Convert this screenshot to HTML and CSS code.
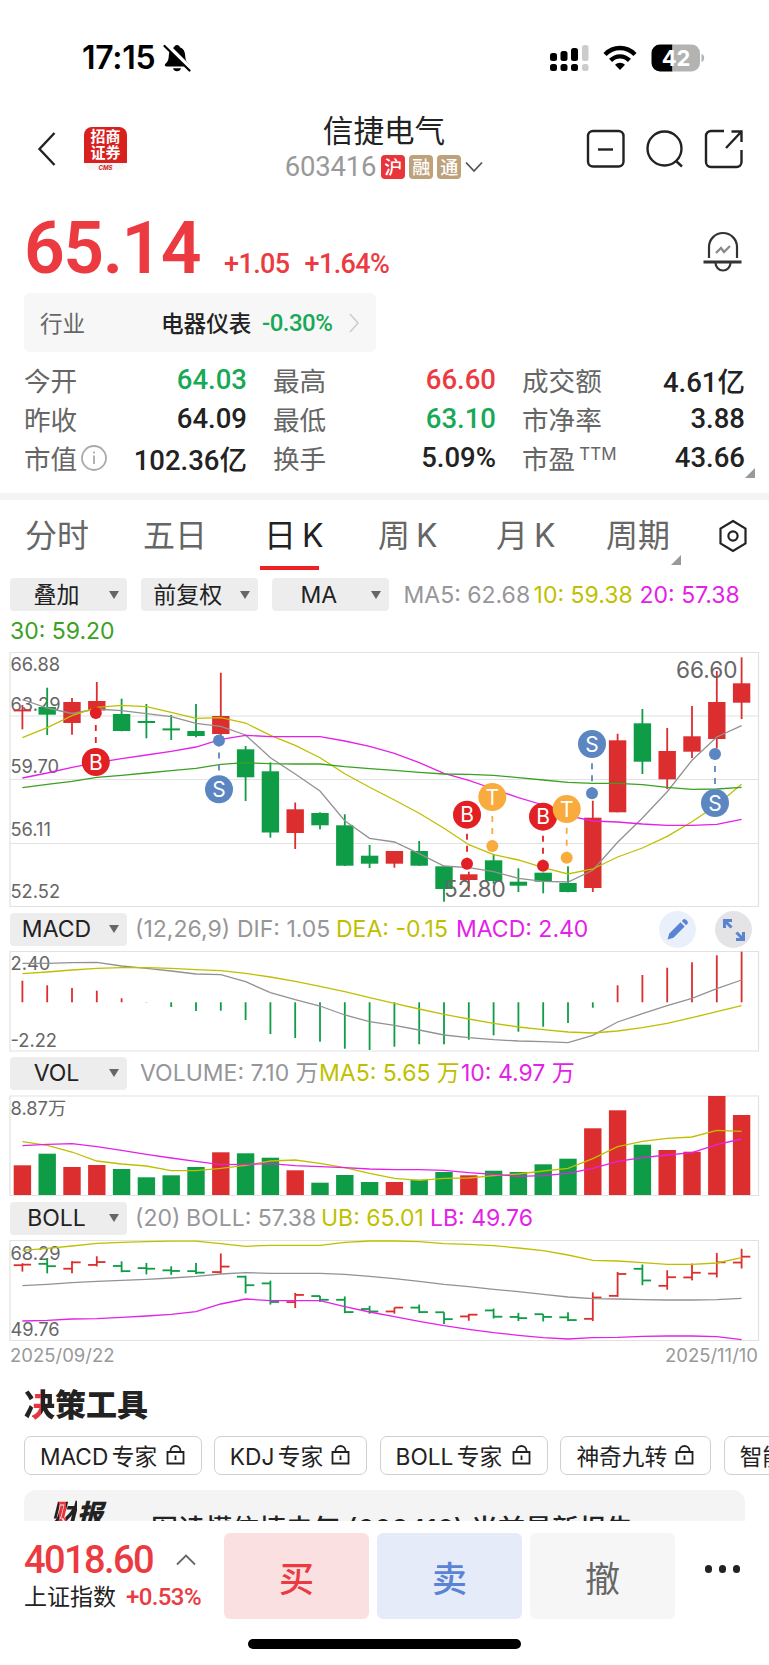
FILE: index.html
```html
<!DOCTYPE html>
<html lang="zh-CN">
    <head>
        <meta charset="UTF-8" />
        <meta name="viewport" content="width=device-width, initial-scale=1.0" />
        <title>信捷电气 603416</title>
        <link rel="stylesheet" href="styles.css">
    </head>
    <body>
        <div class="status-bar">
            <div class="status-left">
                <span class="time">17:15</span>
                <svg class="mute" width="28" height="28" viewBox="0 0 28 28">
                    <path d="M14 1c-1.700 0-2.600 1-2.900 2.300C7.500 4.600 6 7.500 5.800 11.500c-.2 4.500-1 6-3.400 8.300-1.200 1.200-.7 2.600.9 2.600h21.400c1.600 0 2.100-1.400.9-2.600-2.400-2.300-3.200-3.800-3.400-8.300C22 7.500 20.500 4.600 16.900 3.300 16.600 2 15.700 1 14 1z" />
                    <path d="M10 24.200h8c-.5 2-2 3-4 3s-3.500-1-4-3z" />
                    <path d="M3 .5l25 25" stroke="#fff" stroke-width="5" />
                    <path d="M1.500 2l25 24.500" stroke="#000" stroke-width="2.200" stroke-linecap="round" />
                </svg>
            </div>
            <div class="status-right">
                <svg width="39" height="28" viewBox="0 0 39 28">
                    <g fill="#000">
                        <rect x="0" y="9" width="7" height="8" rx="2.500" />
                        <rect x="10.500" y="7" width="7" height="10" rx="2.500" />
                        <rect x="21" y="4" width="7" height="13" rx="2.500" />
                        <rect x="0" y="20" width="7" height="7" rx="2.500" />
                        <rect x="10.500" y="20" width="7" height="7" rx="2.500" />
                        <rect x="21" y="20" width="7" height="7" rx="2.500" />
                    </g>
                    <g fill="#ccc">
                        <rect x="32" y="1" width="6.500" height="16" rx="2.500" />
                        <rect x="32" y="20" width="6.500" height="7" rx="2.500" />
                    </g>
                </svg>
                <svg width="34" height="26" viewBox="0 0 34 26">
                    <g fill="none" stroke="#000" stroke-width="4.400">
                        <path d="M2 9.500c8.500-8.600 21.500-8.600 30 0" />
                        <path d="M7.600 15.400c5.400-5.400 13.400-5.400 18.800 0" />
                    </g>
                    <path d="M17 25l-5-5.200c2.700-2.700 7.300-2.700 10 0z" />
                </svg>
                <svg width="54" height="28" viewBox="0 0 54 28">
                    <path d="M9 .5h12.500v27H9a8.500 8.500 0 0 1-8.500-8.500V9A8.500 8.500 0 0 1 9 .5z" />
                    <path d="M21.500.5H40.500A8.500 8.500 0 0 1 49 9v10a8.500 8.500 0 0 1-8.500 8.500h-19z" fill="#b3b3b3" />
                    <path d="M50.500 10c3.600 1 3.600 7 0 8z" fill="#b3b3b3" />
                    <text x="25" y="22" class="battery-text">42</text>
                </svg>
            </div>
        </div>

        <header class="header">
            <svg class="back" width="20" height="36" viewBox="0 0 20 36">
                <path d="M17.500 2L2.500 18l15 16" />
            </svg>
            <div class="broker">
                <span>招商</span>
                <span>证券</span>
                <em>CMS</em>
            </div>
            <div class="stock">
                <h1>信捷电气</h1>
                <div class="code">
                    <span>603416</span>
                    <i class="tag tag-red">沪</i>
                    <i class="tag">融</i>
                    <i class="tag">通</i>
                    <svg width="18" height="12" viewBox="0 0 18 12"><path d="M1 1.500l8 8.500 8-8.500" /></svg>
                </div>
            </div>
            <div class="actions">
                <svg width="40" height="40" viewBox="0 0 40 40">
                    <rect x="2" y="2" width="35.500" height="35.500" rx="5" />
                    <path d="M12 20.500h15" />
                </svg>
                <svg width="40" height="40" viewBox="0 0 40 40">
                    <circle cx="19.500" cy="19.500" r="17" />
                    <path d="M31 32l6 5.500" />
                </svg>
                <svg width="40" height="40" viewBox="0 0 40 40">
                    <path d="M20 2H7a5 5 0 0 0-5 5v26a5 5 0 0 0 5 5h25.500a5 5 0 0 0 5-5V21" />
                    <path d="M27.500 2.500h10v10.500M37 3L22 19" />
                </svg>
            </div>
        </header>

        <section class="quote">
            <div class="price-row">
                <span class="price">65.14</span>
                <span class="change">+1.05</span>
                <span class="change">+1.64%</span>
                <svg class="bell" width="42" height="42" viewBox="0 0 42 42">
                    <path d="M7 28V17a14 14 0 0 1 28 0v11" />
                    <path d="M1.500 32h38" stroke-width="2.800" />
                    <path d="M13.500 33a7.500 7.500 0 0 0 15 0" />
                    <path d="M14 23l5-5 3 4 6-6" stroke="#888" />
                </svg>
            </div>

            <div class="industry">
                <span class="label">行业</span>
                <span class="name">电器仪表</span>
                <span class="num down">-0.30%</span>
                <svg width="10" height="22" viewBox="0 0 10 22"><path d="M1 2l8 9-8 9" /></svg>
            </div>

            <div class="stats">
                <div class="stat"><label>今开</label><b class="down">64.03</b></div>
                <div class="stat"><label>最高</label><b class="up">66.60</b></div>
                <div class="stat"><label>成交额</label><b>4.61亿</b></div>
                <div class="stat"><label>昨收</label><b>64.09</b></div>
                <div class="stat"><label>最低</label><b class="down">63.10</b></div>
                <div class="stat"><label>市净率</label><b>3.88</b></div>
                <div class="stat">
                    <label>市值</label>
                    <svg class="info" width="26" height="26" viewBox="0 0 26 26">
                        <circle cx="13" cy="13" r="12" />
                        <path d="M13 10.500v8.500M13 6.500v2" />
                    </svg>
                    <b>102.36亿</b>
                </div>
                <div class="stat"><label>换手</label><b>5.09%</b></div>
                <div class="stat stat-more"><label>市盈<sup>TTM</sup></label><b>43.66</b></div>
            </div>
        </section>

        <nav class="tabs">
            <a>分时</a>
            <a>五日</a>
            <a class="active">日 K</a>
            <a>周 K</a>
            <a>月 K</a>
            <a class="more">周期</a>
            <svg width="30" height="34" viewBox="0 0 30 34">
                <path d="M15 2l12.500 7.500v15L15 32 2.500 24.500v-15z" />
                <circle cx="15" cy="17" r="4.600" />
            </svg>
        </nav>

        <div class="legend legend-main">
            <button class="select">叠加</button>
            <button class="select">前复权</button>
            <button class="select">MA</button>
            <span class="c-gray w-ma5">MA5: 62.68</span>
            <span class="c-yellow w-ma10">10: 59.38</span>
            <span class="c-pink w-ma20">20: 57.38</span>
            <span class="c-green w-ma30">30: 59.20</span>
        </div>
        <svg class="chart" id="kline" width="769" height="258" viewBox="0 650 769 258">
            <path class="grid" d="M10 652.500H758.500V906.500H10zM10 716H758.500M10 779.500H758.500M10 843.500H758.500" />
            <g class="axis">
                <text x="10.500" y="670.500">66.88</text>
                <text x="10.500" y="710.500">63.29</text>
                <text x="10.500" y="773">59.70</text>
                <text x="10.500" y="835.500">56.11</text>
                <text x="10.500" y="898">52.52</text>
            </g>
            <g class="series"></g>
            <g class="peak">
                <text x="676" y="677.500">66.60</text>
                <text x="444" y="896.500">52.80</text>
            </g>
            <g class="marks"></g>
        </svg>

        <div class="legend">
            <button class="select">MACD</button>
            <span class="c-gray w-par">(12,26,9)</span>
            <span class="c-gray w-dif">DIF: 1.05</span>
            <span class="c-yellow w-dea">DEA: -0.15</span>
            <span class="c-pink w-macd">MACD: 2.40</span>
            <div class="tools">
                <svg width="37" height="37" viewBox="0 0 37 37">
                    <circle cx="18.500" cy="18.500" r="18.500" fill="#eaf0fb" />
                    <path d="M8.500 28.500l1.800-6L21.500 11.300l4.200 4.200L14.500 26.700zM22.800 10l1.700-1.700c1.400-1.400 5.600 2.800 4.200 4.200L27 14.200z" fill="#5b83d3" />
                </svg>
                <svg width="37" height="37" viewBox="0 0 37 37">
                    <circle cx="18.500" cy="18.500" r="18.500" fill="#e4e4e7" />
                    <path d="M9.500 17V9.500H17M10 10l6.500 6.500M28.500 21v7.500H21M28 28l-6.500-6.500" fill="none" stroke="#5b83d3" stroke-width="3" />
                </svg>
            </div>
        </div>
        <svg class="chart" id="macd" width="769" height="102" viewBox="0 950 769 102">
            <path class="grid" d="M10 951.500H758.500V1051H10z" />
            <g class="axis">
                <text x="10.500" y="970">2.40</text>
                <text x="10.500" y="1047">-2.22</text>
            </g>
            <g class="series"></g>
        </svg>

        <div class="legend">
            <button class="select">VOL</button>
            <span class="c-gray w-vol">VOLUME: 7.10 万</span>
            <span class="c-yellow w-vol5">MA5: 5.65 万</span>
            <span class="c-pink w-vol10">10: 4.97 万</span>
        </div>
        <svg class="chart" id="vol" width="769" height="103" viewBox="0 1094 769 103">
            <path class="grid" d="M10 1096H758.500V1195.500H10z" />
            <g class="axis"><text x="10.500" y="1115">8.87万</text></g>
            <g class="series"></g>
        </svg>

        <div class="legend">
            <button class="select">BOLL</button>
            <span class="c-gray w-n">(20)</span>
            <span class="c-gray w-boll">BOLL: 57.38</span>
            <span class="c-yellow w-ub">UB: 65.01</span>
            <span class="c-pink w-lb">LB: 49.76</span>
        </div>
        <svg class="chart" id="boll" width="769" height="102" viewBox="0 1239 769 102">
            <path class="grid" d="M10 1240.500H758.500V1340.500H10z" />
            <g class="axis">
                <text x="10.500" y="1259.500">68.29</text>
                <text x="10.500" y="1336">49.76</text>
            </g>
            <g class="series"></g>
        </svg>
        <div class="dates"><span>2025/09/22</span><span>2025/11/10</span></div>

        <section class="decision">
            <h2><span class="accent">决</span>策工具</h2>
            <div class="chips">
                <div class="chip w-chip1">MACD 专家 <svg class="lock" width="19" height="20" viewBox="0 0 19 20"><path d="M1.500 7h16v11.500h-16zM4.500 7V6a5 5 0 0 1 10 0v1M9.500 10.500v4.500" /></svg></div>
                <div class="chip w-chip2">KDJ 专家 <svg class="lock" width="19" height="20" viewBox="0 0 19 20"><path d="M1.500 7h16v11.500h-16zM4.500 7V6a5 5 0 0 1 10 0v1M9.500 10.500v4.500" /></svg></div>
                <div class="chip w-chip3">BOLL 专家 <svg class="lock" width="19" height="20" viewBox="0 0 19 20"><path d="M1.500 7h16v11.500h-16zM4.500 7V6a5 5 0 0 1 10 0v1M9.500 10.500v4.500" /></svg></div>
                <div class="chip w-chip4">神奇九转 <svg class="lock" width="19" height="20" viewBox="0 0 19 20"><path d="M1.500 7h16v11.500h-16zM4.500 7V6a5 5 0 0 1 10 0v1M9.500 10.500v4.500" /></svg></div>
                <div class="chip">智能</div>
            </div>
            <div class="report">
                <span class="report-tag"><span class="accent">财</span>报</span>
                <span class="report-title">图读懂信捷电气 (603416) 当前最新报告</span>
            </div>
        </section>

        <footer class="trade">
            <div class="index">
                <div class="index-top">
                    <span class="index-value">4018.60</span>
                    <svg width="20" height="12" viewBox="0 0 20 12"><path d="M1 10.500L10 1.500l9 9" /></svg>
                </div>
                <div class="index-name">上证指数<b>+0.53%</b></div>
            </div>
            <button class="buy">买</button>
            <button class="sell">卖</button>
            <button class="cancel">撤</button>
            <div class="dots"><i></i><i></i><i></i></div>
        </footer>
        <div class="home"></div>

        <script src="script.js"></script>
    </body>
</html>
```
FILE: styles.css
```css
* {
    box-sizing: border-box;
}

body {
    margin: 0;
    width: 769px;
    height: 1665px;
    overflow: hidden;
    background-color: #fff;
    color: #222;
    font-family: Inter, "Noto Sans CJK SC", sans-serif;
}

svg {
    display: block;
    flex: none;
}

button {
    border: none;
    padding: 0;
    font-family: inherit;
}

.up {
    color: #eb3b41;
}

.down {
    color: #18a957;
}

/* status bar */
.status-bar {
    display: flex;
    justify-content: space-between;
    align-items: center;
    height: 100px;
    padding: 15px 64px 0 82px;
    color: #000;
}

.status-left,
.status-right {
    display: flex;
    align-items: center;
}

.status-left {
    gap: 8px;
}

.status-right {
    gap: 14px;
}

.time {
    font-size: 32px;
    font-weight: 600;
    letter-spacing: -0.3px;
}

.battery-text {
    fill: #fff;
    font-size: 22px;
    font-weight: 700;
    text-anchor: middle;
}

/* header */
.header {
    display: flex;
    align-items: center;
    height: 97px;
    padding: 0 25px 0 37px;
}

.header svg path,
.header svg rect,
.header svg circle {
    fill: none;
    stroke: #222;
    stroke-width: 2.4;
}

.broker {
    display: flex;
    flex-direction: column;
    align-items: center;
    width: 43px;
    height: 43px;
    margin-left: 27px;
    padding-top: 2px;
    border-radius: 8px;
    background: linear-gradient(#d8201f 0 36px, #f6f6f6 36px);
    color: #fff;
    font-size: 15px;
    font-weight: 700;
    line-height: 16px;
}

.broker em {
    margin-top: 3px;
    color: #d8201f;
    font-size: 6px;
    line-height: 7px;
}

.stock {
    display: flex;
    flex-direction: column;
    align-items: center;
    width: 200px;
    margin-left: 157px;
}

.stock h1 {
    margin: 0;
    font-size: 30.600px;
    font-weight: 400;
    line-height: 36px;
}

.code {
    display: flex;
    align-items: center;
    gap: 4px;
    height: 35px;
    color: #999;
    font-family: Roboto, sans-serif;
    font-size: 27.500px;
}

.code span {
    margin-right: 1px;
    letter-spacing: -0.2px;
}

.tag {
    width: 24px;
    height: 24px;
    border-radius: 4px;
    background-color: #bea27c;
    color: #fff;
    font: 500 18px/23px "Noto Sans CJK SC", sans-serif;
    text-align: center;
}

.tag-red {
    background-color: #e9343b;
}

.header .code svg path {
    stroke: #555;
    stroke-width: 1.8;
}

.actions {
    display: flex;
    gap: 19px;
    margin-left: auto;
}

/* quote */
.quote {
    height: 296px;
    padding: 0 24px;
}

.price-row {
    display: flex;
    align-items: baseline;
    height: 96px;
    color: #eb3b41;
    font-family: Roboto, sans-serif;
}

.price {
    width: 200px;
    font-size: 71.500px;
    font-weight: 600;
    line-height: 104px;
    letter-spacing: -1.5px;
}

.change {
    margin-right: 15px;
    font-size: 27px;
    font-weight: 500;
    letter-spacing: -0.6px;
}

.bell {
    align-self: center;
    margin: 12px 1px 0 auto;
    fill: none;
    stroke: #333;
    stroke-width: 2.2;
}

.industry {
    display: flex;
    align-items: center;
    width: 352px;
    height: 59px;
    padding: 0 16px;
    border-radius: 6px;
    background-color: #f7f7f7;
    font-size: 22.600px;
}

.industry .label {
    width: 121px;
    color: #666;
}

.industry .name {
    width: 101px;
    font-weight: 500;
}

.industry .num {
    width: 87px;
    font-family: Roboto, sans-serif;
    font-size: 24px;
    font-weight: 500;
    letter-spacing: -0.5px;
}

.industry svg {
    fill: none;
    stroke: #ccc;
    stroke-width: 1.6;
}

.stats {
    display: grid;
    grid-template-columns: repeat(3, 223px);
    column-gap: 26px;
    padding-top: 8px;
}

.stat {
    display: flex;
    align-items: center;
    height: 39.200px;
}

.stat label {
    color: #666;
    font-size: 26.600px;
}

.stat b {
    margin-left: auto;
    font-family: Roboto, "Noto Sans CJK SC", sans-serif;
    font-size: 27.500px;
    font-weight: 500;
}

.stat sup {
    margin-left: 4px;
    font-size: 17px;
    line-height: 1;
}

.stat .info {
    margin-left: 4px;
    fill: none;
    stroke: #aaa;
    stroke-width: 1.8;
}

.stat-more {
    position: relative;
}

.stat-more::after,
.tabs .more::after {
    content: "";
    position: absolute;
    right: -10px;
    bottom: 0;
    border-left: 10px solid transparent;
    border-bottom: 10px solid #999;
}

/* period tabs */
.tabs {
    display: flex;
    align-items: center;
    height: 79px;
    padding: 0 21px 0 25px;
    border-top: 7px solid #f4f4f4;
    color: #666;
    font-size: 32px;
}

.tabs a {
    position: relative;
    width: 118px;
    line-height: 70px;
    white-space: nowrap;
    word-spacing: -3px;
}

.tabs a:nth-child(2) {
    width: 122px;
    margin-right: -1px;
}

.tabs a:nth-child(5) {
    width: 110px;
}

.tabs .active {
    width: 114px;
    color: #222;
}

.tabs .active::after {
    content: "";
    position: absolute;
    left: -4px;
    bottom: 1px;
    width: 59px;
    height: 4px;
    background-color: #ee2224;
}

.tabs .more {
    width: 65px;
}

.tabs .more::after {
    bottom: 6px;
}

.tabs svg {
    margin-left: auto;
    fill: none;
    stroke: #222;
    stroke-width: 2.2;
}

/* indicator legends */
.legend {
    display: flex;
    align-items: center;
    height: 42px;
    padding: 0 17px 0 10px;
    font-size: 23px;
    white-space: nowrap;
}

.legend-main {
    flex-wrap: wrap;
    align-content: flex-start;
    height: 78px;
    padding: 6px 10px 0;
}

.legend span {
    line-height: 32px;
}

.select {
    position: relative;
    width: 117px;
    height: 33px;
    margin-right: 8px;
    padding-right: 24px;
    border-radius: 4px;
    background-color: #ededed;
    color: #222;
    font-size: 23px;
    line-height: 32px;
}

.legend-main .select {
    margin-right: 14.200px;
}

.select::after {
    content: "";
    position: absolute;
    right: 8px;
    top: 12.500px;
    border: 5.500px solid transparent;
    border-top: 8px solid #666;
    border-bottom: none;
}

.c-gray {
    color: #96969a;
}

.c-yellow {
    color: #bfbf00;
}

.c-pink {
    color: #e421e8;
}

.c-green {
    color: #3ba122;
}

.w-ma5 {
    width: 130px;
}

.w-ma10 {
    width: 106px;
}

.w-ma20 {
    width: 100px;
}

.w-ma30 {
    margin-top: 4px;
}

.w-par {
    width: 102px;
}

.w-dif {
    width: 99px;
}

.w-dea {
    width: 120px;
}

.w-vol {
    width: 179px;
    padding-left: 5px;
}

.w-vol5 {
    width: 147px;
    padding-left: 5px;
}

.w-n {
    width: 51px;
}

.w-boll {
    width: 135px;
}

.w-ub {
    width: 109px;
}

.tools {
    display: flex;
    gap: 19.500px;
    margin-left: auto;
}

/* charts */
.grid {
    fill: none;
    stroke: #e2e2e2;
    stroke-width: 1.2;
}

.axis {
    fill: #666;
    font-size: 18.300px;
}

.peak {
    fill: #666;
    font-size: 22.600px;
}

.series polyline {
    fill: none;
    stroke-width: 1.3;
}

.marks text {
    fill: #fff;
    font-size: 21px;
    text-anchor: middle;
}

.dates {
    display: flex;
    justify-content: space-between;
    padding: 1px 11px 0 10px;
    color: #999;
    font-size: 18.500px;
    line-height: 27px;
}

/* decision tools */
.decision {
    height: 152px;
    padding: 17px 0 0 24px;
    overflow: hidden;
}

.decision h2 {
    margin: 0;
    font-size: 31px;
    font-weight: 900;
    line-height: 38px;
}

.accent {
    background: linear-gradient(90deg, #222 0 30%, #e9343b 30% 56%, #222 56%);
    -webkit-background-clip: text;
    background-clip: text;
    color: transparent;
}

.chips {
    display: flex;
    gap: 12.300px;
    margin-top: 12px;
}

.chip {
    display: flex;
    flex: none;
    align-items: center;
    height: 39px;
    padding: 0 15px;
    border: 1.5px solid #d0d0d0;
    border-radius: 7px;
    font-size: 22.700px;
    word-spacing: -3px;
}

.w-chip1 {
    width: 177.500px;
}

.w-chip2 {
    width: 153.500px;
}

.w-chip3 {
    width: 168.500px;
}

.w-chip4 {
    width: 151px;
}

.lock {
    margin: 0 1px 2px auto;
    fill: none;
    stroke: #222;
    stroke-width: 1.8;
}

.report {
    display: flex;
    width: 721px;
    height: 90px;
    margin-top: 15px;
    padding: 8px 27px;
    border-radius: 12px;
    background-color: #f4f4f4;
}

.report-tag {
    width: 100px;
    font-size: 26px;
    font-weight: 900;
    font-style: italic;
    line-height: 32px;
}

.report-title {
    padding-top: 12px;
    font-size: 27px;
    font-weight: 500;
    line-height: 40px;
}

/* trade bar */
.trade {
    display: flex;
    height: 98px;
    padding: 12px 29px 0 24px;
}

.index {
    width: 200px;
}

.index-top {
    display: flex;
    align-items: center;
    justify-content: space-between;
    width: 172px;
    height: 54px;
    color: #eb3b41;
}

.index-value {
    font: 500 38px/54px Roboto, sans-serif;
    letter-spacing: -1.6px;
}

.index-top svg {
    fill: none;
    stroke: #666;
    stroke-width: 1.8;
}

.index-name {
    font-size: 23px;
    line-height: 20px;
    white-space: nowrap;
}

.index-name b {
    margin-left: 10px;
    color: #eb3b41;
    font: 500 24px/20px Roboto, sans-serif;
    letter-spacing: -0.6px;
}

.trade button {
    width: 145px;
    height: 86px;
    margin-right: 8px;
    border-radius: 6px;
    font-size: 35px;
    font-weight: 500;
}

.trade .buy {
    background-color: #fbe0e1;
    color: #eb3b41;
}

.trade .sell {
    background-color: #e5ebf8;
    color: #5b83d3;
}

.trade .cancel {
    background-color: #f6f6f6;
    color: #666;
    font-weight: 400;
}

.dots {
    display: flex;
    gap: 6.500px;
    margin: 32px 0 0 auto;
}

.dots i {
    width: 7.500px;
    height: 7.500px;
    border-radius: 50%;
    background-color: #222;
}

.home {
    width: 273px;
    height: 10px;
    margin: 20px 0 0 248px;
    border-radius: 5px;
    background-color: #000;
}
```
FILE: script.js
```js
const RED = "#dd2e2f";
const GREEN = "#0e9d46";
const GRAY = "#929292";
const YELLOW = "#bfbf00";
const PINK = "#e421e8";

// color, high, low, body top, body bottom
const candles = [
    ["r", 705, 729.3, 709.6, 711.4],
    ["g", 687.7, 735, 707, 714.7],
    ["r", 698, 734.7, 702, 723],
    ["r", 682, 712, 701, 710.5],
    ["g", 698.7, 731.3, 714, 731],
    ["g", 704, 738.3, 721, 723],
    ["g", 715, 740, 728.4, 730.4],
    ["g", 704, 737.3, 731, 736],
    ["r", 672.7, 736, 716, 734],
    ["g", 746, 801, 749.3, 777.3],
    ["g", 762.3, 837.7, 771.3, 832.5],
    ["r", 802.5, 849, 809.3, 833],
    ["g", 812.3, 829.3, 813, 825.3],
    ["g", 814.3, 866, 825.3, 865.7],
    ["g", 845, 868, 855.7, 863.7],
    ["r", 851, 867.7, 851, 863.7],
    ["g", 841, 866, 851, 865.7],
    ["g", 866.3, 901.7, 866.3, 889],
    ["r", 871.7, 891, 874.3, 880],
    ["g", 854.3, 883.7, 860.3, 881],
    ["g", 868.3, 892, 881.7, 885.7],
    ["g", 872.7, 893.3, 872.7, 881.7],
    ["g", 866.3, 892.3, 883, 892],
    ["r", 800.7, 892, 817.7, 888],
    ["r", 733.7, 812.3, 740.3, 812.3],
    ["g", 709, 774, 723.3, 761.7],
    ["r", 728, 789, 751, 779.3],
    ["r", 706, 758, 736.3, 751.7],
    ["r", 671, 748.5, 702, 739],
    ["r", 657.3, 719, 683.3, 702.7],
];

const ma5 = [699.5, 708, 713.5, 709, 710.7, 713.7, 716.7, 723.3, 726.3, 735, 757.7, 774, 791, 820.7, 838.3, 842, 853.7, 866, 867.7, 871.7, 878.3, 881.3, 882, 870.3, 842.3, 818, 791.7, 760.3, 737, 725.7];
const ma10 = [737.7, 727.7, 715.7, 707.3, 705.3, 706.7, 712.3, 718.3, 717.7, 723, 735.3, 745.3, 757.7, 773.7, 787.3, 800, 813.3, 828.3, 844.7, 854.7, 860, 867.7, 874, 869, 857, 848, 836.3, 821.7, 805, 784.3];
const ma20 = [778, 773, 767.3, 762.7, 758.7, 755, 751.3, 747, 739.3, 735.3, 736.7, 736.7, 736.7, 741, 746.3, 753.3, 762.7, 773.3, 780.3, 789, 797.7, 805, 815.7, 821, 822, 824, 825.3, 825.3, 824.3, 819.3];
const ma30 = [787.7, 784.3, 781.3, 777.3, 775.3, 773, 770.7, 768.3, 764.3, 762.7, 763.7, 764, 764, 766.7, 768.7, 770.3, 772.3, 774, 774.3, 775.3, 777.7, 780, 782.3, 783.3, 783.3, 784.7, 787.3, 789.3, 789, 787.3];

const macd = [980.7, 985.3, 988, 990.7, 998.3, 1002.6, 1007, 1011, 1010.7, 1020, 1034, 1038, 1041.7, 1048.7, 1050, 1046.7, 1044.3, 1044.3, 1039.7, 1035.3, 1031.7, 1026.7, 1023, 1007.7, 985.3, 975, 967.7, 962.3, 955.3, 951.7];
const dif = [963.3, 963.3, 962.7, 962.3, 966, 968.3, 971, 974, 974.7, 981.7, 992.7, 999.7, 1006, 1015, 1021.7, 1025.3, 1030, 1035, 1037.7, 1039.7, 1041, 1041.7, 1042.7, 1035.3, 1022, 1013.7, 1005.7, 998.3, 988.7, 980];
const dea = [973.7, 972, 970, 968.3, 967.7, 967.7, 968.3, 969.7, 970.7, 973.3, 977, 981.3, 986.3, 991.7, 997.7, 1003.3, 1009, 1014.3, 1019, 1023.3, 1027, 1029.7, 1032, 1033, 1031, 1027.7, 1023.3, 1017.7, 1011.7, 1005.7];

const vol = [1165.3, 1153.7, 1167, 1165, 1169, 1177.3, 1175.3, 1167, 1152.3, 1153.3, 1157.7, 1170.3, 1182.7, 1175, 1182, 1182, 1179.7, 1172, 1175.3, 1170.7, 1172, 1164.3, 1158.7, 1128.3, 1110.3, 1144.7, 1150, 1151.7, 1096, 1115];
const vol5 = [1141.7, 1145.3, 1152, 1161, 1164, 1166, 1170.7, 1170.7, 1168.3, 1165.3, 1161, 1160, 1163.3, 1167.7, 1173.3, 1178.3, 1180.3, 1178.3, 1178, 1175.7, 1174, 1171, 1168.3, 1158.7, 1146.7, 1141.3, 1138.3, 1137, 1130.3, 1131.3];
const vol10 = [1145.7, 1144.3, 1143.7, 1146.7, 1150.3, 1154.3, 1158, 1161.3, 1164.7, 1164.3, 1163.7, 1165.7, 1166.7, 1167.7, 1169, 1169.7, 1169.7, 1170.3, 1172.7, 1174.3, 1176.3, 1175.7, 1173.3, 1168.3, 1161.3, 1157.7, 1155, 1152.7, 1144.7, 1139];

const mid = [1285.7, 1284.3, 1282.7, 1281.3, 1280.3, 1279.3, 1278, 1276.3, 1274, 1272.7, 1273.3, 1273.3, 1273.3, 1274.3, 1276.3, 1278.7, 1281.3, 1284.3, 1286.7, 1289.3, 1291.7, 1294.3, 1297, 1298.7, 1299, 1299.7, 1300, 1300, 1299.7, 1298.3];
const ub = [1250.3, 1248.3, 1246, 1243.3, 1242.3, 1241.7, 1241.2, 1241.2, 1243.7, 1246.3, 1245.3, 1245.3, 1245.3, 1242.3, 1241, 1241, 1241.7, 1243.7, 1244.3, 1245.7, 1248, 1250.7, 1255, 1260.3, 1261, 1262.7, 1264.3, 1264.3, 1263, 1257.7];
const lb = [1321, 1320.3, 1319, 1318.7, 1317.3, 1316, 1314.3, 1311.7, 1304, 1299, 1300.7, 1300.7, 1300.7, 1306.7, 1312, 1316.7, 1321.3, 1325.7, 1329.3, 1332.7, 1335.3, 1337.7, 1339, 1337.7, 1337.3, 1336.3, 1336, 1336, 1336.7, 1339.7];

// letter, x, circle y, dot y
const marks = [
    ["B", 95.8, 762, 713],
    ["S", 219, 789.3, 740.5],
    ["B", 467, 814.7, 863.7],
    ["T", 492.3, 797, 846],
    ["B", 543, 816.7, 865.7],
    ["T", 566.7, 809, 857.7],
    ["S", 592, 744, 793.3],
    ["S", 715, 803, 754],
];
const markColors = { B: "#e21f22", S: "#5b86c2", T: "#f9ab3e" };

const x = (i) => 22.4 + 24.8 * i;
const color = (i) => (candles[i][0] === "r" ? RED : GREEN);

function rect(left, top, width, height, fill) {
    return `<rect x="${left}" y="${top}" width="${width}" height="${height}" fill="${fill}" />`;
}

function line(data, stroke) {
    const points = data.map((y, i) => `${x(i).toFixed(1)},${y}`).join(" ");
    return `<polyline points="${points}" stroke="${stroke}" />`;
}

function draw(id, html) {
    document.querySelector(id).innerHTML = html;
}

// K line
let html = "";
candles.forEach(([, high, low, top, bottom], i) => {
    html += rect(x(i) - 0.9, high, 1.8, low - high, color(i));
    html += rect(x(i) - 8.7, top, 17.4, bottom - top, color(i));
});
html += line(ma5, GRAY) + line(ma10, YELLOW) + line(ma20, PINK) + line(ma30, "#3ba122");
draw("#kline .series", html);

html = "";
marks.forEach(([letter, cx, cy, dot]) => {
    const c = markColors[letter];
    const start = cy < dot ? cy + 13 : cy - 13;
    html += `<path d="M${cx} ${dot}V${start}" stroke="${c}" stroke-width="1.8" stroke-dasharray="6 6" stroke-dashoffset="0" />`;
    html += `<circle cx="${cx}" cy="${dot}" r="6" fill="${c}" />`;
    html += `<circle cx="${cx}" cy="${cy}" r="14" fill="${c}" />`;
    html += `<text x="${cx}" y="${cy + 7.7}">${letter}</text>`;
});
draw("#kline .marks", html);

// MACD
html = "";
macd.forEach((y, i) => {
    const top = Math.min(y, 1002.3);
    html += rect(x(i) - 0.9, top, 1.8, Math.abs(y - 1002.3), y < 1002.3 ? RED : GREEN);
});
draw("#macd .series", html + line(dif, GRAY) + line(dea, YELLOW));

// VOL
html = "";
vol.forEach((y, i) => {
    html += rect(x(i) - 8.7, y, 17.4, 1195 - y, color(i));
});
draw("#vol .series", html + line(vol5, YELLOW) + line(vol10, PINK));

// BOLL shares the prices of the K line on a smaller scale
const scale = (y) => 1247.3 + (y - 652.5) * 0.3038;
html = "";
candles.forEach(([type, high, low, top, bottom], i) => {
    const open = scale(type === "r" ? bottom : top);
    const close = scale(type === "r" ? top : bottom);
    html += rect(x(i) - 0.9, scale(high), 1.8, (low - high) * 0.3038 + 1, color(i));
    html += rect(x(i) - 8.7, open - 0.9, 8.7, 1.8, color(i));
    html += rect(x(i), close - 0.9, 8.7, 1.8, color(i));
});
draw("#boll .series", html + line(mid, GRAY) + line(ub, YELLOW) + line(lb, PINK));
```
